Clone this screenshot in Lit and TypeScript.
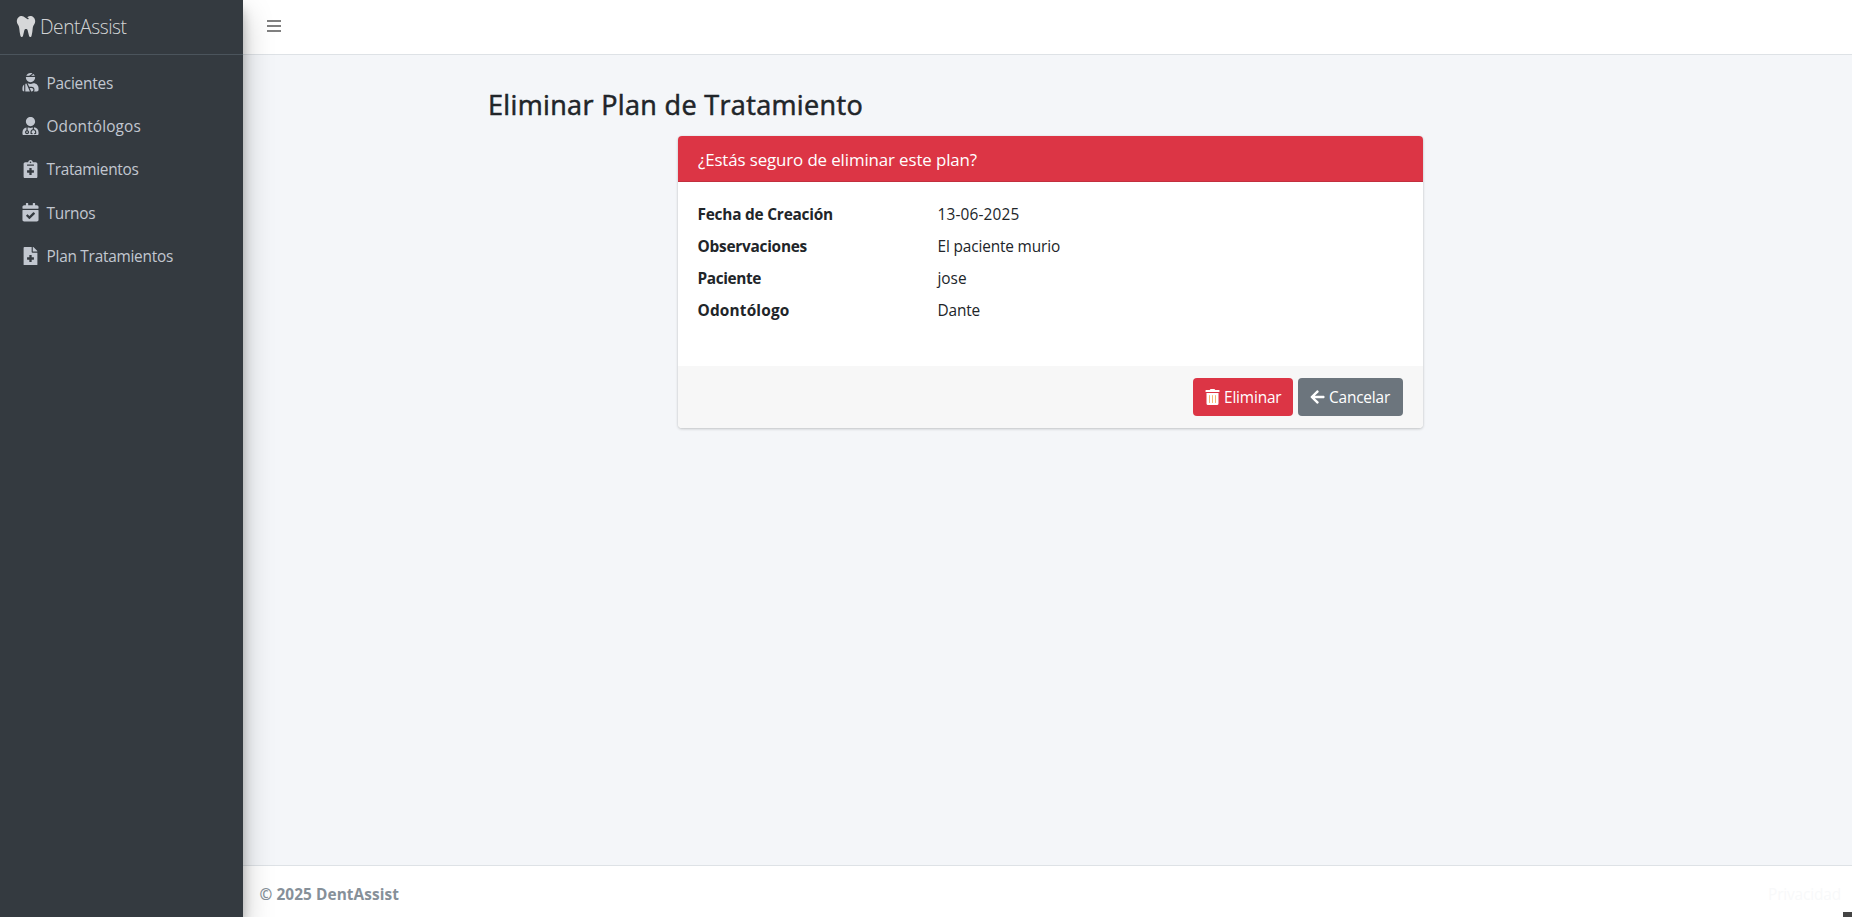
import { LitElement, html, css, svg } from "lit";
import { customElement, property, state } from "lit/decorators.js";
import { styleMap } from "lit/directives/style-map.js";

const paths = {
  tooth: "M443.98 96.25c-11.01-45.22-47.11-82.06-92.01-93.72-32.19-8.36-63 5.1-89.14 24.33-3.25 2.39-6.96 3.73-10.5 5.48l28.32 18.21c7.42 4.77 9.58 14.67 4.8 22.11-4.46 6.95-14.27 9.86-22.11 4.8L162.83 12.84c-20.7-10.85-43.38-16.4-66.81-10.31-44.9 11.67-81 48.5-92.01 93.72-10.13 41.62-.42 80.81 21.5 110.43 23.36 31.57 32.68 68.66 36.29 107.35 4.4 47.16 10.33 94.16 20.94 140.32l7.8 33.95c3.19 13.87 15.49 23.7 29.67 23.7 13.97 0 26.15-9.55 29.54-23.16l34.47-138.42c4.56-18.32 20.96-31.16 39.76-31.16s35.2 12.85 39.76 31.16l34.47 138.42c3.39 13.61 15.57 23.16 29.54 23.16 14.18 0 26.48-9.83 29.67-23.7l7.8-33.95c10.61-46.15 16.53-93.16 20.94-140.32 3.61-38.7 12.93-75.78 36.29-107.35 21.95-29.61 31.66-68.8 21.53-110.43z",
  injured: "M277.37 11.98C261.08 4.47 243.11 0 224 0c-53.69 0-99.5 33.13-118.51 80h81.19l90.69-68.02zM342.51 80c-7.9-19.47-20.67-36.2-36.49-49.52L239.99 80h102.52zM224 256c70.69 0 128-57.31 128-128 0-5.48-.95-10.7-1.61-16H97.61c-.67 5.3-1.61 10.52-1.61 16 0 70.69 57.31 128 128 128zM80 299.7V512h128.26l-98.45-221.52A132.835 132.835 0 0 0 80 299.7zM0 464c0 26.51 21.49 48 48 48V320.24C18.88 344.89 0 381.26 0 422.4V464zm256-48h-55.38l42.67 96H256c26.47 0 48-21.53 48-48s-21.53-48-48-48zm57.6-128h-16.71c-22.24 10.18-46.88 16-72.89 16s-50.65-5.82-72.89-16h-7.37l42.67 96H256c44.11 0 80 35.89 80 80 0 18.08-6.26 34.59-16.41 48H400c26.51 0 48-21.49 48-48v-41.6c0-74.23-60.17-134.4-134.4-134.4z",
  doctor: "M224 256c70.7 0 128-57.3 128-128S294.7 0 224 0 96 57.3 96 128s57.3 128 128 128zM104 424c0 13.3 10.7 24 24 24s24-10.7 24-24-10.7-24-24-24-24 10.7-24 24zm216-135.4v49c36.5 7.4 64 39.8 64 78.4v41.7c0 7.6-5.4 14.2-12.9 15.7l-32.2 6.4c-4.3.9-8.5-1.9-9.4-6.3l-3.1-15.7c-.9-4.3 1.9-8.6 6.3-9.4l19.3-3.9V416c0-62.8-96-65.1-96 1.9v26.7l19.3 3.9c4.3.9 7.1 5.1 6.3 9.4l-3.1 15.7c-.9 4.3-5.1 7.1-9.4 6.3l-31.2-4.2c-7.9-1.1-13.8-7.8-13.8-15.9V416c0-38.6 27.5-70.9 64-78.4v-45.2c-2.2.7-4.4 1.1-6.6 1.9-18 6.3-37.3 9.8-57.4 9.8s-39.4-3.5-57.4-9.8c-7.4-2.6-14.9-4.2-22.6-5.2v81.6c23.1 6.9 40 28.1 40 53.4 0 30.9-25.1 56-56 56s-56-25.1-56-56c0-25.3 16.9-46.5 40-53.4v-80.4C48.5 301 0 355.8 0 422.4v44.8C0 491.9 20.1 512 44.8 512h358.4c24.7 0 44.8-20.1 44.8-44.8v-44.8c0-72-56.8-130.3-128-133.8z",
  notes: "M336 64h-80c0-35.3-28.7-64-64-64s-64 28.7-64 64H48C21.5 64 0 85.5 0 112v352c0 26.5 21.5 48 48 48h288c26.5 0 48-21.5 48-48V112c0-26.5-21.5-48-48-48zm-144-24c13.3 0 24 10.7 24 24s-10.7 24-24 24-24-10.7-24-24 10.7-24 24-24zm96 304c0 4.4-3.6 8-8 8h-56v56c0 4.4-3.6 8-8 8h-48c-4.4 0-8-3.6-8-8v-56h-56c-4.4 0-8-3.6-8-8v-48c0-4.4 3.6-8 8-8h56v-56c0-4.4 3.6-8 8-8h48c4.4 0 8 3.6 8 8v56h56c4.4 0 8 3.6 8 8v48zm0-192c0 4.4-3.6 8-8 8H104c-4.4 0-8-3.6-8-8v-16c0-4.4 3.6-8 8-8h176c4.4 0 8 3.6 8 8v16z",
  calendar: "M436 160H12c-6.627 0-12-5.373-12-12v-36c0-26.51 21.49-48 48-48h48V12c0-6.627 5.373-12 12-12h40c6.627 0 12 5.373 12 12v52h128V12c0-6.627 5.373-12 12-12h40c6.627 0 12 5.373 12 12v52h48c26.51 0 48 21.49 48 48v36c0 6.627-5.373 12-12 12zM12 192h424c6.627 0 12 5.373 12 12v260c0 26.51-21.49 48-48 48H48c-26.51 0-48-21.49-48-48V204c0-6.627 5.373-12 12-12zm333.296 95.947l-28.169-28.398c-4.667-4.705-12.265-4.736-16.97-.068L194.12 364.665l-45.98-46.352c-4.667-4.705-12.266-4.736-16.971-.068l-28.397 28.17c-4.705 4.667-4.736 12.265-.068 16.97l82.601 83.269c4.667 4.705 12.265 4.736 16.97.068l142.953-141.805c4.705-4.667 4.736-12.265.088-16.97z",
  file: "M377 105L279.1 7c-4.5-4.5-10.6-7-17-7H256v128h128v-6.1c0-6.3-2.5-12.4-7-16.9zM224 136V0H24C10.7 0 0 10.7 0 24v464c0 13.3 10.7 24 24 24h336c13.3 0 24-10.7 24-24V160H248c-13.2 0-24-10.8-24-24zm64 160v48c0 4.4-3.6 8-8 8h-56v56c0 4.4-3.6 8-8 8h-48c-4.4 0-8-3.6-8-8v-56h-56c-4.4 0-8-3.6-8-8v-48c0-4.4 3.6-8 8-8h56v-56c0-4.4 3.6-8 8-8h48c4.4 0 8 3.6 8 8v56h56c4.4 0 8 3.6 8 8z",
  trash: "M32 464a48 48 0 0 0 48 48h288a48 48 0 0 0 48-48V128H32zm272-256a16 16 0 0 1 32 0v224a16 16 0 0 1-32 0zm-96 0a16 16 0 0 1 32 0v224a16 16 0 0 1-32 0zm-96 0a16 16 0 0 1 32 0v224a16 16 0 0 1-32 0zM432 32H312l-9.4-18.7A24 24 0 0 0 281.1 0H166.8a23.72 23.72 0 0 0-21.4 13.3L136 32H16A16 16 0 0 0 0 48v32a16 16 0 0 0 16 16h416a16 16 0 0 0 16-16V48a16 16 0 0 0-16-16z",
  arrow: "M257.5 445.1l-22.2 22.2c-9.4 9.4-24.6 9.4-33.9 0L7 273c-9.4-9.4-9.4-24.6 0-33.9L201.4 44.7c9.4-9.4 24.6-9.4 33.9 0l22.2 22.2c9.5 9.5 9.3 25-.4 34.3L136.6 216H424c13.3 0 24 10.7 24 24v32c0 13.3-10.7 24-24 24H136.6l120.5 114.8c9.8 9.3 10 24.8.4 34.3z",
};

const icon = (name: keyof typeof paths, w = 448) =>
  html`<svg class="icon ${name}" viewBox="0 0 ${w} 512">
    ${name === "trash" ? svg`<path class="slots" d="M100 190h248v260H100z"></path>` : null}
    <path fill="currentColor" d=${paths[name]}></path>
  </svg>`;

/** One line of text tracked so that it spans a given width. */
@customElement("fit-text")
class FitText extends LitElement {
  static styles = css`
    :host { display: inline-block; white-space: nowrap; }
    .run { display: inline-block; }
  `;
  @property({ type: Number }) span = 0;
  @property() text = "";
  @state() private tracking = 0;

  firstUpdated() {
    const run = this.renderRoot.querySelector(".run") as HTMLElement;
    const natural = run.getBoundingClientRect().width;
    this.tracking = (this.span - natural) / this.text.length;
  }
  render() {
    return html`<span class="run" style=${styleMap({ letterSpacing: `${this.tracking}px` })}>${this.text}</span>`;
  }
}

const t = (text: string, span: number) => html`<fit-text .text=${text} .span=${span}></fit-text>`;

@customElement("app-root")
class AppRoot extends LitElement {
  static styles = css`
    :host {
      display: block;
      height: 100vh;
      overflow: hidden;
      font: 400 15.4px/24px "Open Sans", "Noto Sans", sans-serif;
      color: #212529;
    }
    * { box-sizing: border-box; }
    .icon { display: block; flex: none; }
    .layout { display: grid; grid-template-columns: 243px 1fr; height: 100%; position: relative; }
    .sidebar {
      background: #343a40;
      color: #c2c7d0;
      z-index: 2;
      box-shadow: 0 14px 28px rgba(0, 0, 0, .25), 0 10px 10px rgba(0, 0, 0, .22);
    }
    .brand {
      height: 55px;
      display: flex;
      align-items: center;
      gap: 4px;
      padding-left: 16px;
      border-bottom: 1px solid #4b545c;
      font-size: 19.2px;
      font-weight: 300;
      color: rgba(255, 255, 255, .8);
    }
    .brand .icon { width: 20px; height: 21px; margin-bottom: 2px; }
    .menu { list-style: none; margin: 0; padding: 7px 8px 0; }
    .menu li { height: 43.3px; display: flex; align-items: center; padding-left: 14px; gap: 7.5px; }
    .menu .icon { width: 17px; height: 18.4px; margin-bottom: 2px; }
    .page { display: grid; grid-template-rows: 55px 1fr 52px; min-width: 0; }
    .topbar { background: #fff; border-bottom: 1px solid #dee2e6; padding: 20px 0 0 24px; }
    .burger { width: 14px; height: 12px; display: flex; flex-direction: column; justify-content: space-between; }
    .burger i { height: 2px; background: #808080; }
    .content { background: #f4f6f9; padding: 33px 0 0 245px; }
    h1 { margin: 0; font-size: 27px; font-weight: 500; line-height: 34px; height: 48px; -webkit-text-stroke: .55px currentColor; }
    .card {
      margin-left: 190px;
      width: 745px;
      height: 292px;
      border-radius: 4px;
      background: #fff;
      box-shadow: 0 0 1px rgba(0, 0, 0, .125), 0 1px 3px rgba(0, 0, 0, .2);
      overflow: hidden;
      display: grid;
      grid-template-rows: 46px 184px 62px;
    }
    .question {
      background: #dc3545;
      color: #fff;
      border-bottom: 1px solid #c2303e;
      padding: 13px 20px 0;
      font-size: 16.9px;
      line-height: 22px;
    }
    dl { margin: 0; padding: 21px 20px 0 19.5px; display: grid; grid-template-columns: 240px 1fr; grid-auto-rows: 32px; align-content: start; }
    dt { font-weight: 700; }
    dd { margin: 0; }
    .actions { background: #f7f7f7; display: flex; justify-content: flex-end; gap: 5px; padding: 12px 20px; }
    .btn {
      height: 38px;
      border: 0;
      border-radius: 4px;
      color: #fff;
      font: inherit;
      display: flex;
      align-items: center;
      padding: 0 0 0 12px;
      gap: 4px;
    }
    .btn .icon { width: 15px; height: 16px; }
    .btn fit-text { padding-top: 2px; }
    .danger { background: #dc3545; width: 100px; }
    .cancel { background: #6c757d; width: 105px; }
    .slots { fill: #f5b873; }
    .footer {
      background: #fff;
      border-top: 1px solid #dee2e6;
      color: #869099;
      display: flex;
      justify-content: space-between;
      padding: 17px 11px 0 16.5px;
      font-weight: 700;
    }
    .privacy { color: #f8f9fa; font-weight: 400; }
    .corner { position: absolute; right: 0; bottom: 0; width: 9px; height: 5px; background: #444; }
  `;

  private menu = [
    { icon: icon("injured"), label: "Pacientes", span: 66.5 },
    { icon: icon("doctor"), label: "Odontólogos", span: 94.5 },
    { icon: icon("notes", 384), label: "Tratamientos", span: 92 },
    { icon: icon("calendar"), label: "Turnos", span: 49 },
    { icon: icon("file", 384), label: "Plan Tratamientos", span: 126.5 },
  ];

  private details = [
    { label: "Fecha de Creación", span: 135.5, value: "13-06-2025", valueSpan: 82 },
    { label: "Observaciones", span: 109.5, value: "El paciente murio", valueSpan: 122.5 },
    { label: "Paciente", span: 63.5, value: "jose", valueSpan: 29 },
    { label: "Odontólogo", span: 92, value: "Dante", valueSpan: 42.5 },
  ];

  render() {
    return html`<div class="layout">
      <aside class="sidebar">
        <div class="brand">${icon("tooth")}${t("DentAssist", 86.5)}</div>
        <ul class="menu">
          ${this.menu.map((m) => html`<li>${m.icon}${t(m.label, m.span)}</li>`)}
        </ul>
      </aside>
      <div class="page">
        <header class="topbar"><div class="burger"><i></i><i></i><i></i></div></header>
        <main class="content">
          <h1>${t("Eliminar Plan de Tratamiento", 375)}</h1>
          <section class="card">
            <div class="question">${t("¿Estás seguro de eliminar este plan?", 279)}</div>
            <dl>
              ${this.details.map((d) => html`<dt>${t(d.label, d.span)}</dt><dd>${t(d.value, d.valueSpan)}</dd>`)}
            </dl>
            <div class="actions">
              <button class="btn danger">${icon("trash")}${t("Eliminar", 57.5)}</button>
              <button class="btn cancel">${icon("arrow")}${t("Cancelar", 61)}</button>
            </div>
          </section>
        </main>
        <footer class="footer">${t("© 2025 DentAssist", 139.5)}<span class="privacy">${t("Privacidad", 73)}</span></footer>
      </div>
      <div class="corner"></div>
    </div>`;
  }
}
